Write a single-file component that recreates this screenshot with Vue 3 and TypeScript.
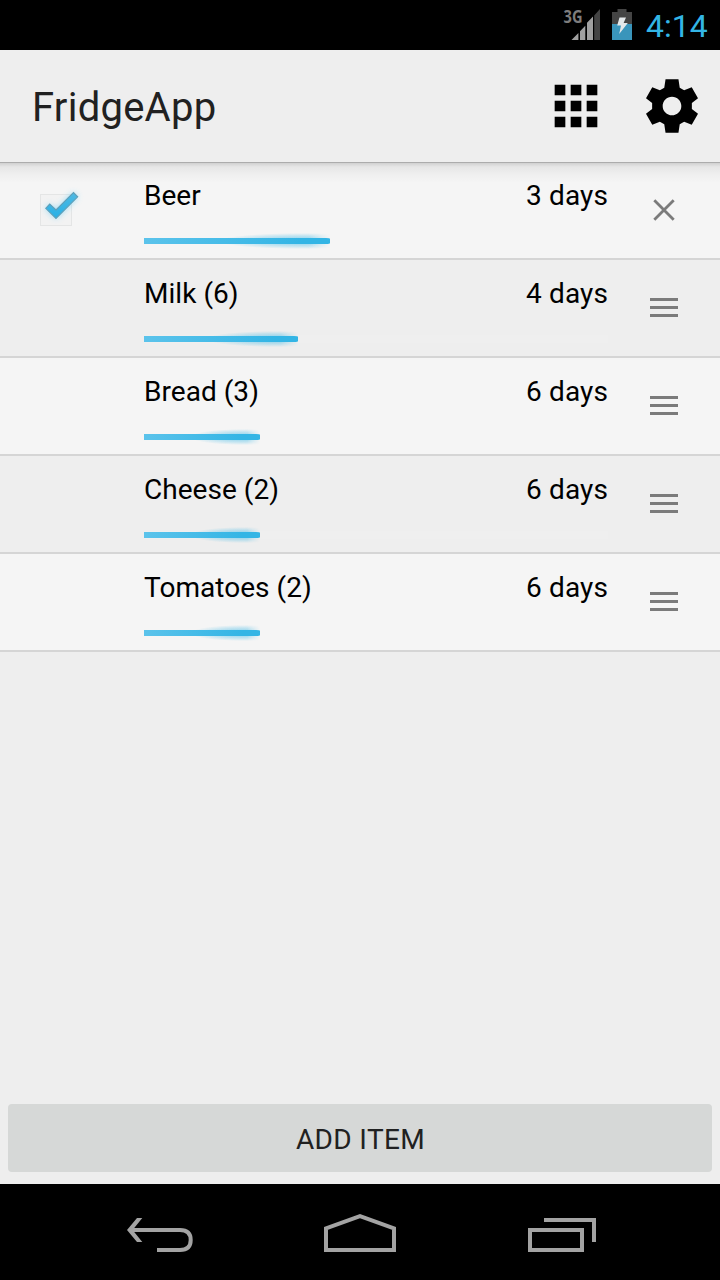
<script setup lang="ts">
interface Item {
  name: string
  days: string
  progress: number
  checked: boolean
}

const items: Item[] = [
  { name: 'Beer', days: '3 days', progress: 186, checked: true },
  { name: 'Milk (6)', days: '4 days', progress: 154, checked: false },
  { name: 'Bread (3)', days: '6 days', progress: 116, checked: false },
  { name: 'Cheese (2)', days: '6 days', progress: 116, checked: false },
  { name: 'Tomatoes (2)', days: '6 days', progress: 116, checked: false },
]
</script>

<template>
  <div class="screen">
    <div class="status">
      <svg class="signal" width="40" height="50" viewBox="0 0 40 50">
        <text x="3.5" y="23" textLength="19" lengthAdjust="spacingAndGlyphs" class="net">3G</text>
        <path d="M11.5 40L18.4 33V40Z M20 40V31.3L25.3 25.8V40Z M27 40V22.8L33 16.5V40Z" fill="#a0a0a0" />
        <path d="M34.2 40V15.5L40 9V40Z" fill="#444" />
      </svg>
      <svg class="battery" width="20" height="50" viewBox="0 0 20 50">
        <path d="M5.5 9H14.5V12H20V24H0V12H5.5Z" fill="#444" />
        <path d="M0 24H20V40H0Z" fill="#3a95bb" />
        <path d="M7.5 17.5H14L11.6 23H15.8L7.2 34L9 25.6H5.2Z" fill="#e4e8ea" />
      </svg>
      <span class="clock">4:14</span>
    </div>

    <header class="bar">
      <h1 class="title">FridgeApp</h1>
      <svg class="action" width="64" height="64" viewBox="0 0 24 24">
        <path d="M4 8h4V4H4v4zm6 12h4v-4h-4v4zm-6 0h4v-4H4v4zm0-6h4v-4H4v4zm6 0h4v-4h-4v4zm6-10v4h4V4h-4zm-6 4h4V4h-4v4zm6 6h4v-4h-4v4zm0 6h4v-4h-4v4z" />
      </svg>
      <svg class="action" width="64" height="64" viewBox="0 0 24 24">
        <path d="M9.58 2H14.42L14.9 5.2L16.55 6.1L19.4 4.98L21.75 9.05L19.45 10.9V13.1L21.75 14.95L19.4 19.02L16.55 17.9L14.9 18.8L14.42 22H9.58L9.1 18.8L7.45 17.9L4.6 19.02L2.25 14.95L4.55 13.1V10.9L2.25 9.05L4.6 4.98L7.45 6.1L9.1 5.2ZM12 15.5c-1.93 0-3.5-1.57-3.5-3.5s1.57-3.5 3.5-3.5 3.5 1.57 3.5 3.5-1.57 3.5-3.5 3.5z" fill-rule="evenodd" />
      </svg>
    </header>

    <main class="content">
      <ul class="list">
        <li v-for="item in items" :key="item.name" class="row">
          <div class="check">
            <svg v-if="item.checked" width="60" height="60" viewBox="30 180 60 60">
              <defs>
                <filter id="glow" x="-50%" y="-50%" width="200%" height="200%">
                  <feGaussianBlur stdDeviation="3.2" />
                </filter>
                <linearGradient id="tick" x1="0" y1="0" x2="0" y2="1">
                  <stop offset="0" stop-color="#4fb9e2" />
                  <stop offset="1" stop-color="#27b0e6" />
                </linearGradient>
              </defs>
              <rect x="40.5" y="194.5" width="31" height="31" fill="#f2f2f2" stroke="#e4e5e5" />
              <path d="M45.5 208.3L49.6 204L56 210L73.5 192.5L77.7 196.8L56 218.5Z" fill="#7fd4f6" opacity=".85" filter="url(#glow)" />
              <path d="M45.7 208.3L49.7 204.1L56 210L73.5 192.6L77.7 196.8L56 218.5Z" fill="url(#tick)" stroke="#5f9fb8" stroke-width="1.1" />
            </svg>
          </div>
          <div class="info">
            <div class="labels">
              <span class="name">{{ item.name }}</span>
              <span class="days">{{ item.days }}</span>
            </div>
            <div class="track">
              <div class="fill" :style="{ width: item.progress + 'px' }"></div>
            </div>
          </div>
          <div class="handle">
            <svg v-if="item.checked" width="28" height="28" viewBox="0 0 28 28">
              <path d="M4.3 4.3L23.7 23.7M23.7 4.3L4.3 23.7" stroke="#7b7b7b" stroke-width="2.8" />
            </svg>
            <svg v-else width="28" height="28" viewBox="0 0 28 28">
              <path d="M0 5.5H28M0 13.5H28M0 21.5H28" stroke="#7b7b7b" stroke-width="3" />
            </svg>
          </div>
        </li>
      </ul>
      <button class="add" type="button">ADD ITEM</button>
    </main>

    <nav class="nav">
      <svg width="720" height="96" viewBox="0 1184 720 96" fill="none" stroke="#a3a3a3" stroke-width="4">
        <path d="M130 1230H180Q190.7 1230 190.7 1240Q190.7 1250 180 1250H157" />
        <path d="M142.3 1218H137L127 1230L137 1242H142.3L132.6 1230Z" fill="#a3a3a3" stroke="none" />
        <path d="M326 1250V1228.3L360 1216.2L394 1228.3V1250Z" />
        <path d="M530 1230H582V1250H530ZM544 1220H594V1242" />
      </svg>
    </nav>
  </div>
</template>

<style>
body {
  margin: 0;
}
</style>

<style scoped>
.screen {
  width: 720px;
  height: 1280px;
  display: flex;
  flex-direction: column;
  overflow: hidden;
  background: #eee;
  font-family: Roboto, "Noto Sans", sans-serif;
  color: #000;
}
svg {
  display: block;
  flex: none;
}
.status {
  height: 50px;
  flex: none;
  display: flex;
  justify-content: flex-end;
  background: #000;
  padding-right: 11px;
  box-sizing: border-box;
}
.net {
  font: 700 17.5px "Open Sans", sans-serif;
  fill: #7d7d7d;
}
.battery {
  margin-left: 12px;
}
.clock {
  width: 63px;
  margin-left: 14px;
  font-size: 32px;
  line-height: 53px;
  color: #33b5e5;
  white-space: nowrap;
}
.bar {
  height: 112px;
  flex: none;
  display: flex;
  align-items: center;
  gap: 32px;
  box-sizing: border-box;
  padding: 0 16px 0 32px;
}
.title {
  flex: 1;
  margin: 0;
  font-size: 40px;
  font-weight: 400;
  line-height: 48px;
  padding-top: 4px;
  letter-spacing: 0.25px;
  color: #212121;
}
.content {
  flex: 1;
  display: flex;
  flex-direction: column;
  justify-content: space-between;
  position: relative;
}
.content::before {
  content: "";
  position: absolute;
  z-index: 1;
  inset: 0 0 auto;
  height: 20px;
  border-top: 1px solid #acacac;
  background: linear-gradient(rgba(0, 0, 0, 0.15), rgba(0, 0, 0, 0.06) 4px, rgba(0, 0, 0, 0.025) 12px, transparent);
}
.list {
  list-style: none;
  margin: 0;
  padding: 0;
}
.row {
  height: 98px;
  box-sizing: border-box;
  display: flex;
  border-bottom: 2px solid #d5d5d5;
  background: #f5f5f5;
}
.row:nth-child(even) {
  background: #eee;
}
.check {
  width: 144px;
  box-sizing: border-box;
  padding: 18px 0 0 30px;
}
.info {
  width: 464px;
}
.labels {
  display: flex;
  justify-content: space-between;
  font-size: 28px;
  line-height: 34px;
  padding-top: 17px;
  white-space: nowrap;
}
.name {
  letter-spacing: 0.04px;
}
.days {
  letter-spacing: 0.12px;
}
.track {
  margin-top: 24px;
  height: 8px;
  padding: 1px 0;
  box-sizing: border-box;
  background: rgba(255, 255, 255, 0.08);
}
.fill {
  position: relative;
  height: 6px;
}
.fill::before {
  content: "";
  position: absolute;
  inset: -5px 0 -5px 25%;
  background: radial-gradient(ellipse 60% 50% at 80% 50%, rgba(51, 181, 229, 0.65), rgba(51, 181, 229, 0.25) 65%, transparent);
  mask-image: linear-gradient(90deg, #000 85%, transparent);
}
.fill::after {
  content: "";
  position: absolute;
  inset: 0;
  border-radius: 0 4px 4px 0 / 0 1px 1px 0;
  background: linear-gradient(90deg, #5bc3eb, #33b5e5 85%);
}
.handle {
  width: 112px;
  box-sizing: border-box;
  padding: 34px 0 0 42px;
}
.add {
  height: 68px;
  margin: 0 8px 12px;
  padding: 4px 0 0 1px;
  border: 0;
  border-radius: 4px;
  background: #d6d8d7;
  font: 400 28px/34px Roboto, "Noto Sans", sans-serif;
  letter-spacing: 0.35px;
  color: #212121;
}
.nav {
  height: 96px;
  flex: none;
  background: #000;
}
</style>
